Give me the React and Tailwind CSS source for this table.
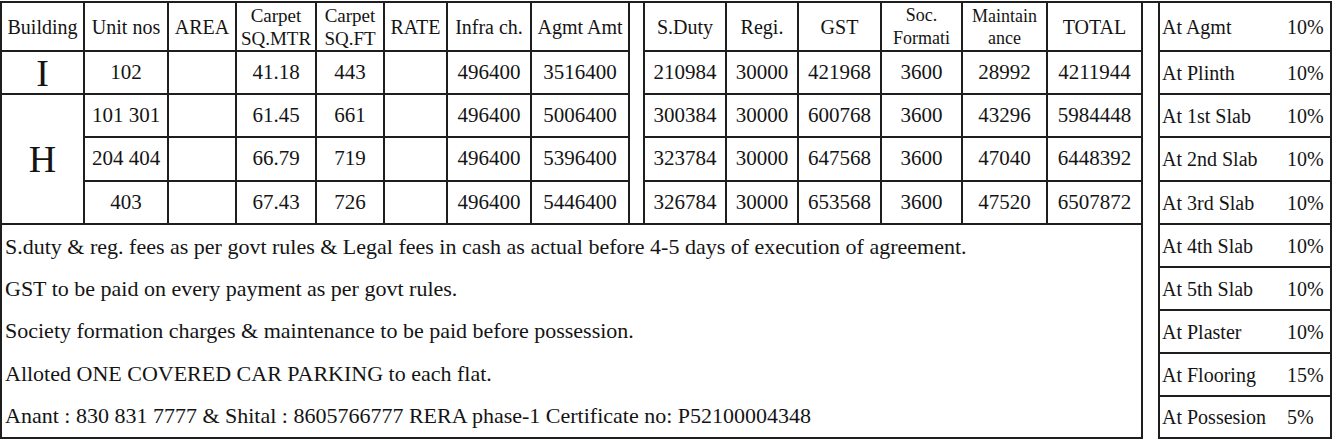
import React from 'react';

const line = 'border-[#1e1e1e]';

const headers = [
	{ t: ['Building'] },
	{ t: ['Unit nos'] },
	{ t: ['AREA'] },
	{ t: ['Carpet', 'SQ.MTR'], size: 'text-[19px] leading-[23px]' },
	{ t: ['Carpet', 'SQ.FT'], size: 'text-[19px] leading-[23px]' },
	{ t: ['RATE'] },
	{ t: ['Infra ch.'] },
	{ t: ['Agmt Amt'] },
	{ gap: true },
	{ t: ['S.Duty'] },
	{ t: ['Regi.'] },
	{ t: ['GST'] },
	{ t: ['Soc.', 'Formati'], size: 'text-[18px] leading-[23px]' },
	{ t: ['Maintain', 'ance'], size: 'text-[18px] leading-[22px]' },
	{ t: ['TOTAL'] },
];

const rows = [
	{ b: 'I', span: 'row-span-1', v: ['102', '', '41.18', '443', '', '496400', '3516400', '210984', '30000', '421968', '3600', '28992', '4211944'] },
	{ b: 'H', span: 'row-span-3', v: ['101 301', '', '61.45', '661', '', '496400', '5006400', '300384', '30000', '600768', '3600', '43296', '5984448'] },
	{ v: ['204 404', '', '66.79', '719', '', '496400', '5396400', '323784', '30000', '647568', '3600', '47040', '6448392'] },
	{ v: ['403', '', '67.43', '726', '', '496400', '5446400', '326784', '30000', '653568', '3600', '47520', '6507872'] },
];

const notes = [
	'S.duty & reg. fees as per govt rules & Legal fees in cash as actual before 4-5 days of execution of agreement.',
	'GST to be paid on every payment as per govt rules.',
	'Society formation charges & maintenance to be paid before possession.',
	'Alloted ONE COVERED CAR PARKING to each flat.',
	'Anant : 830 831 7777 & Shital : 8605766777 RERA phase-1 Certificate no: P52100004348',
];

const stages = [
	['At Agmt', '10%', 'h-[49px]'],
	['At Plinth', '10%', 'h-[43px]'],
	['At 1st Slab', '10%', 'h-[43px]'],
	['At 2nd Slab', '10%', 'h-[44px]'],
	['At 3rd Slab', '10%', 'h-[43px]'],
	['At 4th Slab', '10%', 'h-[43px]'],
	['At 5th Slab', '10%', 'h-[43px]'],
	['At Plaster', '10%', 'h-[43px]'],
	['At Flooring', '15%', 'h-[43px]'],
	['At Possesion', '5%', 'h-[42px]'],
];

const cell = `flex items-center justify-center text-center border-r-2 border-b-2 ${line}`;

export default function App() {
	return (
		<div className="w-[1336px] h-[444px] bg-white text-[#141414] font-['Liberation_Serif',serif] pt-px">
			<div className={`w-[1332px] flex border-t-2 ${line}`}>
				{/* main sheet */}
				<div className="w-[1143px] flex flex-col">
					<div className={`grid grid-cols-[83px_84px_68px_80px_68px_63px_84px_98px_15px_82px_72px_83px_81px_85px_95px] grid-rows-[49px_43px_43px_44px_43px] border-l-2 ${line}`}>
						{headers.map((h, i) =>
							h.gap ? (
								<div key={i} className={`row-span-5 border-r-2 border-b-2 ${line}`} />
							) : (
								<div key={i} className={`${cell} flex-col ${h.size || 'text-[20px] leading-[24px]'}`}>
									{h.t.map((s) => (
										<span key={s}>{s}</span>
									))}
								</div>
							)
						)}
						{rows.map((r, ri) => (
							<React.Fragment key={ri}>
								{r.b && <div className={`${cell} ${r.span} text-[38px] leading-none`}>{r.b}</div>}
								{r.v.map((v, vi) => (
									<div key={vi} className={`${cell} text-[21px]`}>
										{v}
									</div>
								))}
							</React.Fragment>
						))}
					</div>
					{/* notes */}
					<div className={`h-[214px] grid grid-rows-5 border-l-2 border-r-2 border-b-2 ${line} text-[22px] pl-[3px]`}>
						{notes.map((n) => (
							<div key={n} className="flex items-center whitespace-nowrap">
								{n}
							</div>
						))}
					</div>
				</div>

				<div className="w-[15px]" />

				{/* payment schedule */}
				<div className={`w-[174px] flex flex-col border-l-2 border-r-2 ${line} text-[20px]`}>
					{stages.map(([label, pct, h]) => (
						<div key={label} className={`${h} grid grid-cols-[125px_1fr] items-center border-b-2 ${line} pl-[2px]`}>
							<span className="whitespace-nowrap">{label}</span>
							<span>{pct}</span>
						</div>
					))}
				</div>
			</div>
		</div>
	);
}
